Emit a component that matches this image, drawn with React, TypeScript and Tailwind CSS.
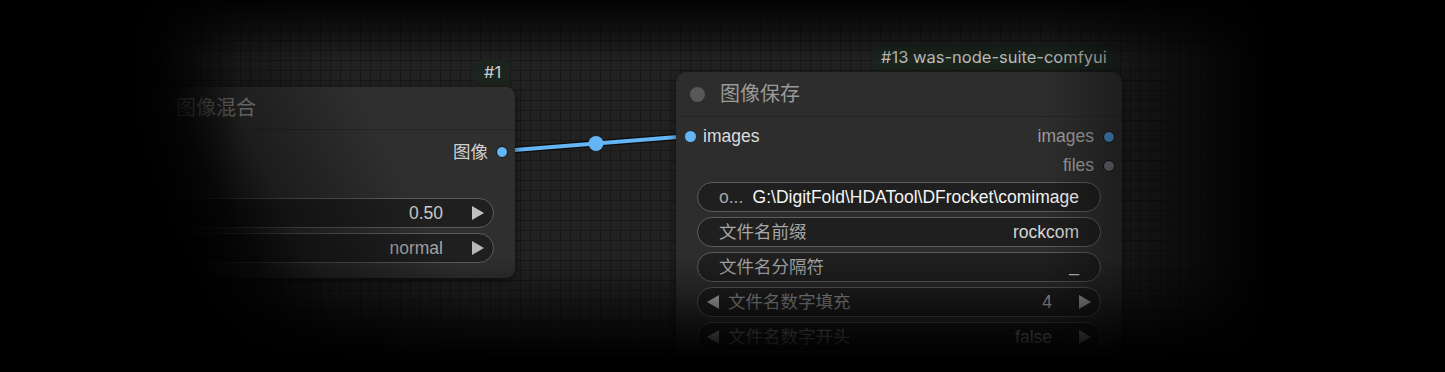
import React from 'react';

const FONT = "font-['Liberation_Sans','Noto_Sans_CJK_SC',sans-serif]";

function Tri({ dir, className }: { dir: 'l' | 'r'; className?: string }) {
  return (
    <svg width="14" height="16" viewBox="0 0 14 16" className={className}>
      {dir === 'r' ? <polygon points="1,1 13,8 1,15" fill="currentColor" /> : <polygon points="13,1 1,8 13,15" fill="currentColor" />}
    </svg>
  );
}

function Dot({ color, ring = true, size = 11 }: { color: string; ring?: boolean; size?: number }) {
  return (
    <span
      className={`block shrink-0 rounded-full ${ring ? 'border-[1.5px] border-[#111]' : ''}`}
      style={{ width: size, height: size, background: color }}
    />
  );
}

function Pill({ children }: { children: React.ReactNode }) {
  return (
    <div className="h-[30px] shrink-0 rounded-full border border-[#5c5c5c] bg-[#1f1f1f] flex items-center text-[17.5px]">
      {children}
    </div>
  );
}

function ComboRow({ label, value }: { label: string; value: string }) {
  return (
    <Pill>
      <Tri dir="l" className="ml-[8px] text-[#bdbdbd]" />
      <span className="ml-[8px] text-[#9a9a9a] truncate">{label}</span>
      <span className="ml-auto text-[#bdbdbd]">{value}</span>
      <Tri dir="r" className="ml-[26px] mr-[8px] text-[#bdbdbd]" />
    </Pill>
  );
}

function TextRow({ label, value, bright }: { label: string; value: string; bright?: boolean }) {
  return (
    <Pill>
      <span className="ml-[21px] text-[#a6a6a6] whitespace-nowrap">{label}</span>
      <span className={`ml-auto mr-[21px] whitespace-nowrap ${bright ? 'text-[#f4f4f4]' : 'text-[#d8d8d8]'}`}>{value}</span>
    </Pill>
  );
}

export default function App() {
  return (
    <div className={`relative w-[1445px] h-[372px] overflow-hidden bg-[#222222] ${FONT}`}>
      {/* grid */}
      <div className="absolute inset-0 bg-[linear-gradient(#181818_1px,transparent_1px),linear-gradient(90deg,#181818_1px,transparent_1px)] [background-size:10px_10px]" />

      {/* link */}
      <svg className="absolute inset-0" width="1445" height="372">
        <line x1="502" y1="151" x2="690" y2="136" stroke="#0c0c0c" strokeWidth="6.5" />
        <line x1="502" y1="151" x2="690" y2="136" stroke="#64b5f6" strokeWidth="4" />
        <circle cx="596" cy="143.5" r="7.5" fill="#64b5f6" />
      </svg>

      {/* node #1 badge */}
      <div className="absolute left-[475px] top-[60px] h-[25px] px-[9px] rounded-t-[6px] bg-[#1b251d] flex items-center text-[16.5px] text-[#cccccc] font-['Inter',sans-serif]">
        #1
      </div>

      {/* node #1 */}
      <div className="absolute left-[132px] top-[87px] w-[383px] h-[191px] rounded-[9px] bg-[#2f2f2f] shadow-[0_2px_8px_rgba(0,0,0,0.6)] flex flex-col">
        <div className="h-[43px] shrink-0 flex items-center pl-[14px] border-b border-[#262626]">
          <span className="w-[14px] h-[14px] rounded-full bg-[#4a4a4a]" />
          <span className="ml-[16px] text-[20px] text-[#9a9a9a]">图像混合</span>
        </div>
        <div className="pt-[7px] flex flex-col">
          <div className="h-[30px] flex items-center pl-[9px] pr-[7px]">
            <Dot color="#3f6f94" size={11} />
            <span className="ml-auto text-[17.5px] text-[#d0d0d0]">图像</span>
            <span className="ml-[8px]"><Dot color="#64b5f6" size={12} /></span>
          </div>
          <div className="h-[30px] flex items-center pl-[9px]">
            <Dot color="#3f6f94" size={11} />
          </div>
        </div>
        <div className="mt-[1px] px-[21px] flex flex-col gap-[5px]">
          <Pill>
            <Tri dir="l" className="ml-[8px] text-[#6a6a6a]" />
            <span className="ml-auto text-[#cacaca]">0.50</span>
            <Tri dir="r" className="ml-[28px] mr-[8px] text-[#c0c0c0]" />
          </Pill>
          <Pill>
            <Tri dir="l" className="ml-[8px] text-[#6a6a6a]" />
            <span className="ml-auto text-[#a8a8a8]">normal</span>
            <Tri dir="r" className="ml-[28px] mr-[8px] text-[#b8b8b8]" />
          </Pill>
        </div>
      </div>

      {/* node #13 badge */}
      <div className="absolute left-[873px] top-[44px] h-[26px] pl-[8px] pr-[10px] rounded-t-[6px] bg-[#1b241d] flex items-center text-[16.5px] text-[#bdbdbd] font-['Inter',sans-serif]">
        #13 was-node-suite-comfyui
      </div>

      {/* node #13 */}
      <div className="absolute left-[676px] top-[72px] w-[446px] h-[330px] rounded-[10px] bg-[#2d2d2d] shadow-[0_2px_8px_rgba(0,0,0,0.6)] flex flex-col">
        <div className="h-[45px] shrink-0 flex items-center pl-[14px] border-b border-[#252525]">
          <span className="w-[15px] h-[15px] rounded-full bg-[#585858]" />
          <span className="ml-[15px] text-[20px] text-[#9a9a9a]">图像保存</span>
        </div>
        <div className="pt-[5px] flex flex-col">
          <div className="h-[29px] flex items-center pl-[9px] pr-[7px]">
            <Dot color="#64b5f6" ring={false} size={11} />
            <span className="ml-[7px] text-[17.5px] text-[#dcdcdc]">images</span>
            <span className="ml-auto text-[17.5px] text-[#9d9d9d]">images</span>
            <span className="ml-[9px]"><Dot color="#4a8ac4" size={12} /></span>
          </div>
          <div className="h-[29px] flex items-center pr-[7px]">
            <span className="ml-auto text-[17.5px] text-[#9d9d9d]">files</span>
            <span className="ml-[9px]"><Dot color="#686872" size={12} /></span>
          </div>
        </div>
        <div className="mt-[2px] px-[21px] flex flex-col gap-[5px]">
          <TextRow label="o..." value="G:\DigitFold\HDATool\DFrocket\comimage" bright />
          <TextRow label="文件名前缀" value="rockcom" />
          <Pill>
            <span className="ml-[21px] text-[#a6a6a6]">文件名分隔符</span>
            <span className="ml-auto mr-[21px] self-end mb-[3px] text-[#d6d6d6]">_</span>
          </Pill>
          <ComboRow label="文件名数字填充" value="4" />
          <ComboRow label="文件名数字开头" value="false" />
        </div>
      </div>

      {/* vignette */}
      <div className="absolute inset-0 pointer-events-none bg-[linear-gradient(90deg,#000_0px,#000_130px,transparent_240px)]" />
      <div className="absolute inset-0 pointer-events-none bg-[linear-gradient(62deg,#000_0px,#000_215px,rgba(0,0,0,0.8)_275px,rgba(0,0,0,0.4)_330px,transparent_450px)]" />
      <div className="absolute inset-0 pointer-events-none bg-[linear-gradient(270deg,#000_0px,#000_180px,transparent_400px)]" />
      <div className="absolute inset-0 pointer-events-none bg-[linear-gradient(180deg,rgba(0,0,0,0.92)_0px,rgba(0,0,0,0.6)_25px,transparent_60px)]" />
      <div className="absolute inset-0 pointer-events-none bg-[linear-gradient(0deg,#000_0px,#000_14px,rgba(0,0,0,0.72)_45px,rgba(0,0,0,0.3)_80px,transparent_115px)]" />
    </div>
  );
}
